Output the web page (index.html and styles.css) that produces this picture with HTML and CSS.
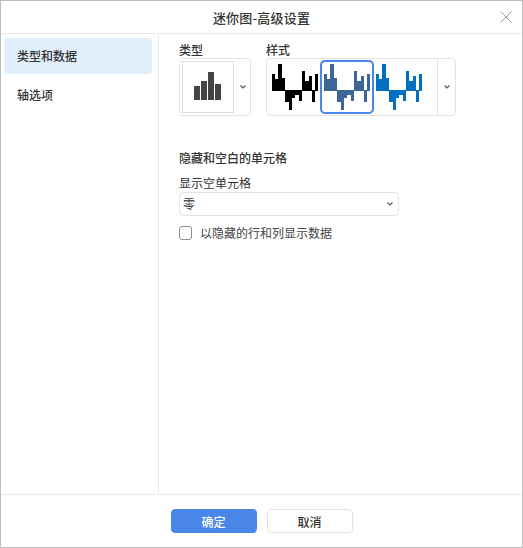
FILE: index.html
```html
<!DOCTYPE html>
<html lang="zh-CN">
<head>
<meta charset="utf-8">
<title>迷你图-高级设置</title>
<link rel="stylesheet" href="styles.css">
</head>
<body>
<svg class="defs" width="0" height="0" aria-hidden="true">
  <symbol id="spark" viewBox="0 0 46 47">
    <path shape-rendering="crispEdges" d="M0 10h3v17H0zM3 15h3v12H3zM6 0h4v27H6zM10 14h3v13h-3zM13 26h4v12h-4zM17 26h3v20h-3zM20 26h3v8h-3zM23 26h4v5h-4zM27 26h3v11h-3zM30 7h3v20h-3zM33 17h4v10h-4zM37 12h3v15h-3zM40 26h3v12h-3zM43 10h3v17h-3z"/>
  </symbol>
</svg>
<div class="dialog">
  <header class="title-bar">
    <span class="title">迷你图-高级设置</span>
    <svg class="close" width="12" height="12" viewBox="0 0 12 12"><path d="M.5.500l11 11M11.500.500l-11 11"/></svg>
  </header>
  <div class="main">
    <nav class="side">
      <div class="nav-item active">类型和数据</div>
      <div class="nav-item">轴选项</div>
    </nav>
    <section class="content">
      <div class="pickers">
        <div class="picker">
          <div class="label">类型</div>
          <div class="type-box">
            <div class="type-thumb">
              <svg width="28" height="29" viewBox="0 0 28 29"><path class="bars" d="M0 14h6v14H0zM7 9h6v19H7zM14 0h6v28h-6zM21 12h6v16h-6z"/></svg>
            </div>
            <svg class="chev" width="6" height="4" viewBox="0 0 6 4"><path d="M.5.500L3 3 5.500.500"/></svg>
          </div>
        </div>
        <div class="picker">
          <div class="label">样式</div>
          <div class="style-box">
            <div class="styles">
              <div class="swatch black"><svg width="46" height="47"><use href="#spark"/></svg></div>
              <div class="swatch slate selected"><svg width="46" height="47"><use href="#spark"/></svg></div>
              <div class="swatch blue"><svg width="46" height="47"><use href="#spark"/></svg></div>
            </div>
            <div class="more"><svg class="chev" width="6" height="4" viewBox="0 0 6 4"><path d="M.5.500L3 3 5.500.500"/></svg></div>
          </div>
        </div>
      </div>
      <h2 class="section-title">隐藏和空白的单元格</h2>
      <div class="field-label">显示空单元格</div>
      <div class="select"><span>零</span><svg class="chev" width="6" height="4" viewBox="0 0 6 4"><path d="M.5.500L3 3 5.500.500"/></svg></div>
      <label class="check"><span class="box"></span><span>以隐藏的行和列显示数据</span></label>
    </section>
  </div>
  <footer class="footer">
    <button class="btn primary">确定</button>
    <button class="btn">取消</button>
  </footer>
</div>
</body>
</html>
```

FILE: styles.css
```css
* { box-sizing: border-box; }
html, body { margin: 0; padding: 0; background: #fff; }
body { font-family: "Noto Sans CJK SC", "Liberation Sans", sans-serif; font-size: 12px; color: #333; height: 548px; overflow: hidden; }
.defs { position: absolute; }
.dialog { width: 523px; height: 548px; border: 1px solid #bdbdbd; display: flex; flex-direction: column; background: #fff; }
.title-bar { height: 33px; flex: none; border-bottom: 1px solid #e8e8e8; display: flex; align-items: center; justify-content: center; position: relative; }
.title { font-size: 13px; font-weight: 500; color: #333; line-height: 33px; margin-top: 1px; letter-spacing: 0.2px; }
.close { position: absolute; right: 10px; top: 10px; }
.close path { fill: none; stroke: #999; stroke-width: 1; }
.main { flex: 1; display: flex; min-height: 0; }
.side { width: 158px; flex: none; border-right: 1px solid #e8e8e8; padding: 4px 6px 0 3px; }
.nav-item { height: 36px; line-height: 36px; padding-left: 13px; margin-bottom: 3px; border-radius: 4px; font-weight: 500; }
.active { background: #e1eefc; }
.content { flex: 1; padding: 8px 0 0 20px; }
.pickers { display: flex; gap: 15px; }
.label { font-weight: 500; line-height: 16px; height: 16px; }
.type-box { width: 72px; height: 58px; border: 1px solid #e3e3e3; border-radius: 4px; padding: 2px; display: flex; align-items: center; }
.type-thumb { width: 52px; height: 52px; border: 1px solid #ddd; display: flex; align-items: flex-end; justify-content: center; padding: 0 0 11px 0; }
.bars { fill: #444; }
.type-box .chev { margin-left: 6px; }
.chev path { fill: none; stroke: #555; stroke-width: 1.2; }
.style-box { width: 190px; height: 58px; border: 1px solid #e3e3e3; border-radius: 4px; display: flex; }
.styles { flex: 1; display: flex; gap: 0; padding: 1px 0 0 1px; }
.swatch { width: 54px; height: 54px; border: 2px solid transparent; border-radius: 5px; margin-right: -2px; padding-left: 2px; }
.swatch svg { display: block; margin-top: 2px; }
.selected { border-color: #4a86e8; }
.black { fill: #000; }
.slate { fill: #3c6598; }
.blue { fill: #0070c0; }
.more { width: 18px; flex: none; border-left: 1px solid #e3e3e3; display: flex; align-items: center; justify-content: center; }
.section-title { font-size: 12px; font-weight: 500; margin: 34px 0 0; line-height: 16px; color: #333; }
.field-label { margin-top: 9px; line-height: 16px; }
.select { width: 220px; height: 24px; margin-top: 1px; border: 1px solid #e3e3e3; border-radius: 4px; display: flex; align-items: center; justify-content: space-between; padding: 0 5px 0 3px; line-height: 20px; }
.check { display: flex; align-items: center; gap: 8px; margin-top: 9px; line-height: 16px; color: #444; }
.box { width: 13px; height: 14px; border: 1px solid #8f8f8f; border-radius: 3px; flex: none; }
.footer { height: 53px; flex: none; border-top: 1px solid #e8e8e8; display: flex; justify-content: center; gap: 10px; padding: 14px 0 0 0; }
.btn { width: 86px; height: 24px; padding: 0; border: 1px solid #e3e3e3; border-radius: 4px; background: #fff; font: 500 12px "Noto Sans CJK SC", sans-serif; color: #333; }
.primary { background: #4a86e8; border-color: #4a86e8; color: #fff; }
```
